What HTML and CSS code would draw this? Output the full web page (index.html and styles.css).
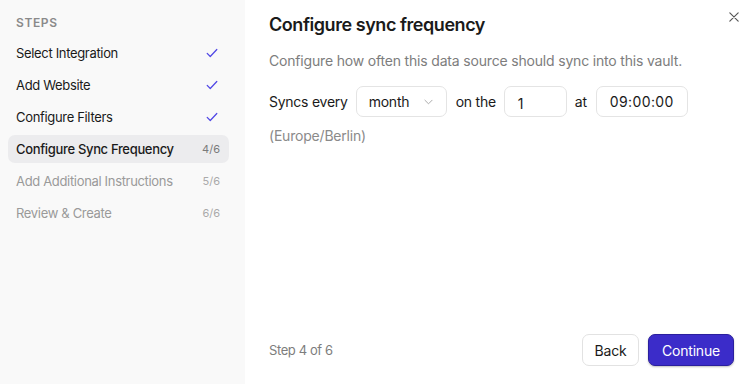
FILE: index.html
```html
<!DOCTYPE html>
<html lang="en">
<head>
    <meta charset="UTF-8">
    <title>Configure sync frequency</title>
    <link rel="stylesheet" href="styles.css">
</head>
<body>

<div class="dialog">
    <aside class="sidebar">
        <div class="steps-title">STEPS</div>
        <div class="step done">
            <span>Select Integration</span>
            <svg class="check" viewBox="0 0 16 16" width="14" height="14"><path d="M2.5 8.5l3.5 3.5 7.5-8" fill="none" stroke="#4f46e5" stroke-width="1.4" stroke-linecap="round" stroke-linejoin="round"/></svg>
        </div>
        <div class="step done">
            <span>Add Website</span>
            <svg class="check" viewBox="0 0 16 16" width="14" height="14"><path d="M2.5 8.5l3.5 3.5 7.5-8" fill="none" stroke="#4f46e5" stroke-width="1.4" stroke-linecap="round" stroke-linejoin="round"/></svg>
        </div>
        <div class="step done">
            <span>Configure Filters</span>
            <svg class="check" viewBox="0 0 16 16" width="14" height="14"><path d="M2.5 8.5l3.5 3.5 7.5-8" fill="none" stroke="#4f46e5" stroke-width="1.4" stroke-linecap="round" stroke-linejoin="round"/></svg>
        </div>
        <div class="step active">
            <span>Configure Sync Frequency</span>
            <span class="count">4/6</span>
        </div>
        <div class="step todo">
            <span>Add Additional Instructions</span>
            <span class="count">5/6</span>
        </div>
        <div class="step todo">
            <span>Review &amp; Create</span>
            <span class="count">6/6</span>
        </div>
    </aside>

    <main class="content">
        <button class="close-btn" aria-label="Close">
            <svg viewBox="0 0 12 12" width="10" height="10"><path d="M1 1l10 10M11 1L1 11" stroke="#555" stroke-width="1.4" stroke-linecap="round"/></svg>
        </button>
        <h1>Configure sync frequency</h1>
        <p class="desc">Configure how often this data source should sync into this vault.</p>

        <div class="sync-row">
            <span>Syncs every</span>
            <div class="field select">
                <span>month</span>
                <svg viewBox="0 0 10 6" width="9" height="6"><path d="M1 1l4 4 4-4" fill="none" stroke="#aaa" stroke-width="1.1" stroke-linecap="round" stroke-linejoin="round"/></svg>
            </div>
            <span>on the</span>
            <div class="field day">1</div>
            <span>at</span>
            <div class="field time">09:00:00</div>
        </div>
        <div class="tz">(Europe/Berlin)</div>

        <div class="footer">
            <span class="step-count">Step 4 of 6</span>
            <div class="actions">
                <button class="btn back">Back</button>
                <button class="btn primary">Continue</button>
            </div>
        </div>
    </main>
</div>

</body>
</html>
```

FILE: styles.css
```css
body {
    margin: 0;
    font-family: Inter, "Noto Sans", sans-serif;
    color: #1a1a1a;
    background: #fff;
}
.dialog {
    display: flex;
    width: 754px;
    height: 384px;
}
.sidebar {
    width: 245px;
    background: #f9f9f9;
    padding: 15px 16px 0 8px;
    box-sizing: border-box;
}
.steps-title {
    font-size: 12px;
    font-weight: 600;
    color: #8a8a8a;
    letter-spacing: 0.6px;
    padding-left: 8px;
    margin-bottom: 9px;
}
.step {
    display: flex;
    justify-content: space-between;
    align-items: center;
    height: 28px;
    margin-bottom: 4px;
    padding: 0 9px 0 8px;
    border-radius: 7px;
    font-size: 13px;
    letter-spacing: -0.33px;
}
.step .check {
    margin-right: 1px;
}
.step.active {
    background: #ececee;
    font-weight: 500;
}
.step.todo {
    color: #9a9a9a;
}
.count {
    font-size: 11px;
    color: #7a7a7a;
    font-weight: 400;
    letter-spacing: 0;
}
.step.todo .count {
    color: #aaa;
}
.content {
    flex: 1;
    position: relative;
    padding: 12px 20px 18px 24px;
    display: flex;
    flex-direction: column;
}
.close-btn {
    position: absolute;
    top: 10px;
    right: 15px;
    background: none;
    border: none;
    padding: 0;
    cursor: pointer;
}
h1 {
    margin: 0;
    font-size: 18px;
    font-weight: 600;
    line-height: 26px;
    letter-spacing: -0.45px;
}
.desc {
    margin: 13px 0 0;
    font-size: 14px;
    color: #7d7d7d;
    line-height: 20px;
    letter-spacing: -0.18px;
}
.sync-row {
    display: flex;
    align-items: center;
    margin-top: 15px;
    font-size: 14px;
    letter-spacing: -0.25px;
}
.field {
    border: 1px solid #e4e4e4;
    border-radius: 7px;
    display: flex;
    align-items: center;
    box-sizing: border-box;
    height: 31px;
}
.select {
    width: 91px;
    margin: 0 9px 0 8px;
    padding: 0 13px 0 12px;
    justify-content: space-between;
}
.day {
    width: 63px;
    margin: 0 8px;
    padding: 3px 0 0 13px;
}
.time {
    width: 92px;
    margin-left: 9px;
    justify-content: center;
    letter-spacing: 0.4px;
}
.tz {
    margin-top: 10px;
    font-size: 14px;
    color: #8a8a8a;
    letter-spacing: -0.2px;
}
.footer {
    margin-top: auto;
    display: flex;
    justify-content: space-between;
    align-items: center;
}
.step-count {
    font-size: 13px;
    color: #7d7d7d;
    letter-spacing: -0.4px;
}
.actions {
    display: flex;
    gap: 9px;
}
.btn {
    height: 32px;
    border-radius: 7px;
    font-family: inherit;
    font-size: 14px;
    cursor: pointer;
    letter-spacing: -0.2px;
}
.back {
    width: 57px;
    background: #fff;
    border: 1px solid #e2e2e2;
    color: #1a1a1a;
}
.primary {
    width: 86px;
    background: #3b2cc9;
    border: 1px solid #2a1f9e;
    color: #fff;
    box-shadow: 0 1px 2px rgba(0, 0, 0, 0.25);
}
```
